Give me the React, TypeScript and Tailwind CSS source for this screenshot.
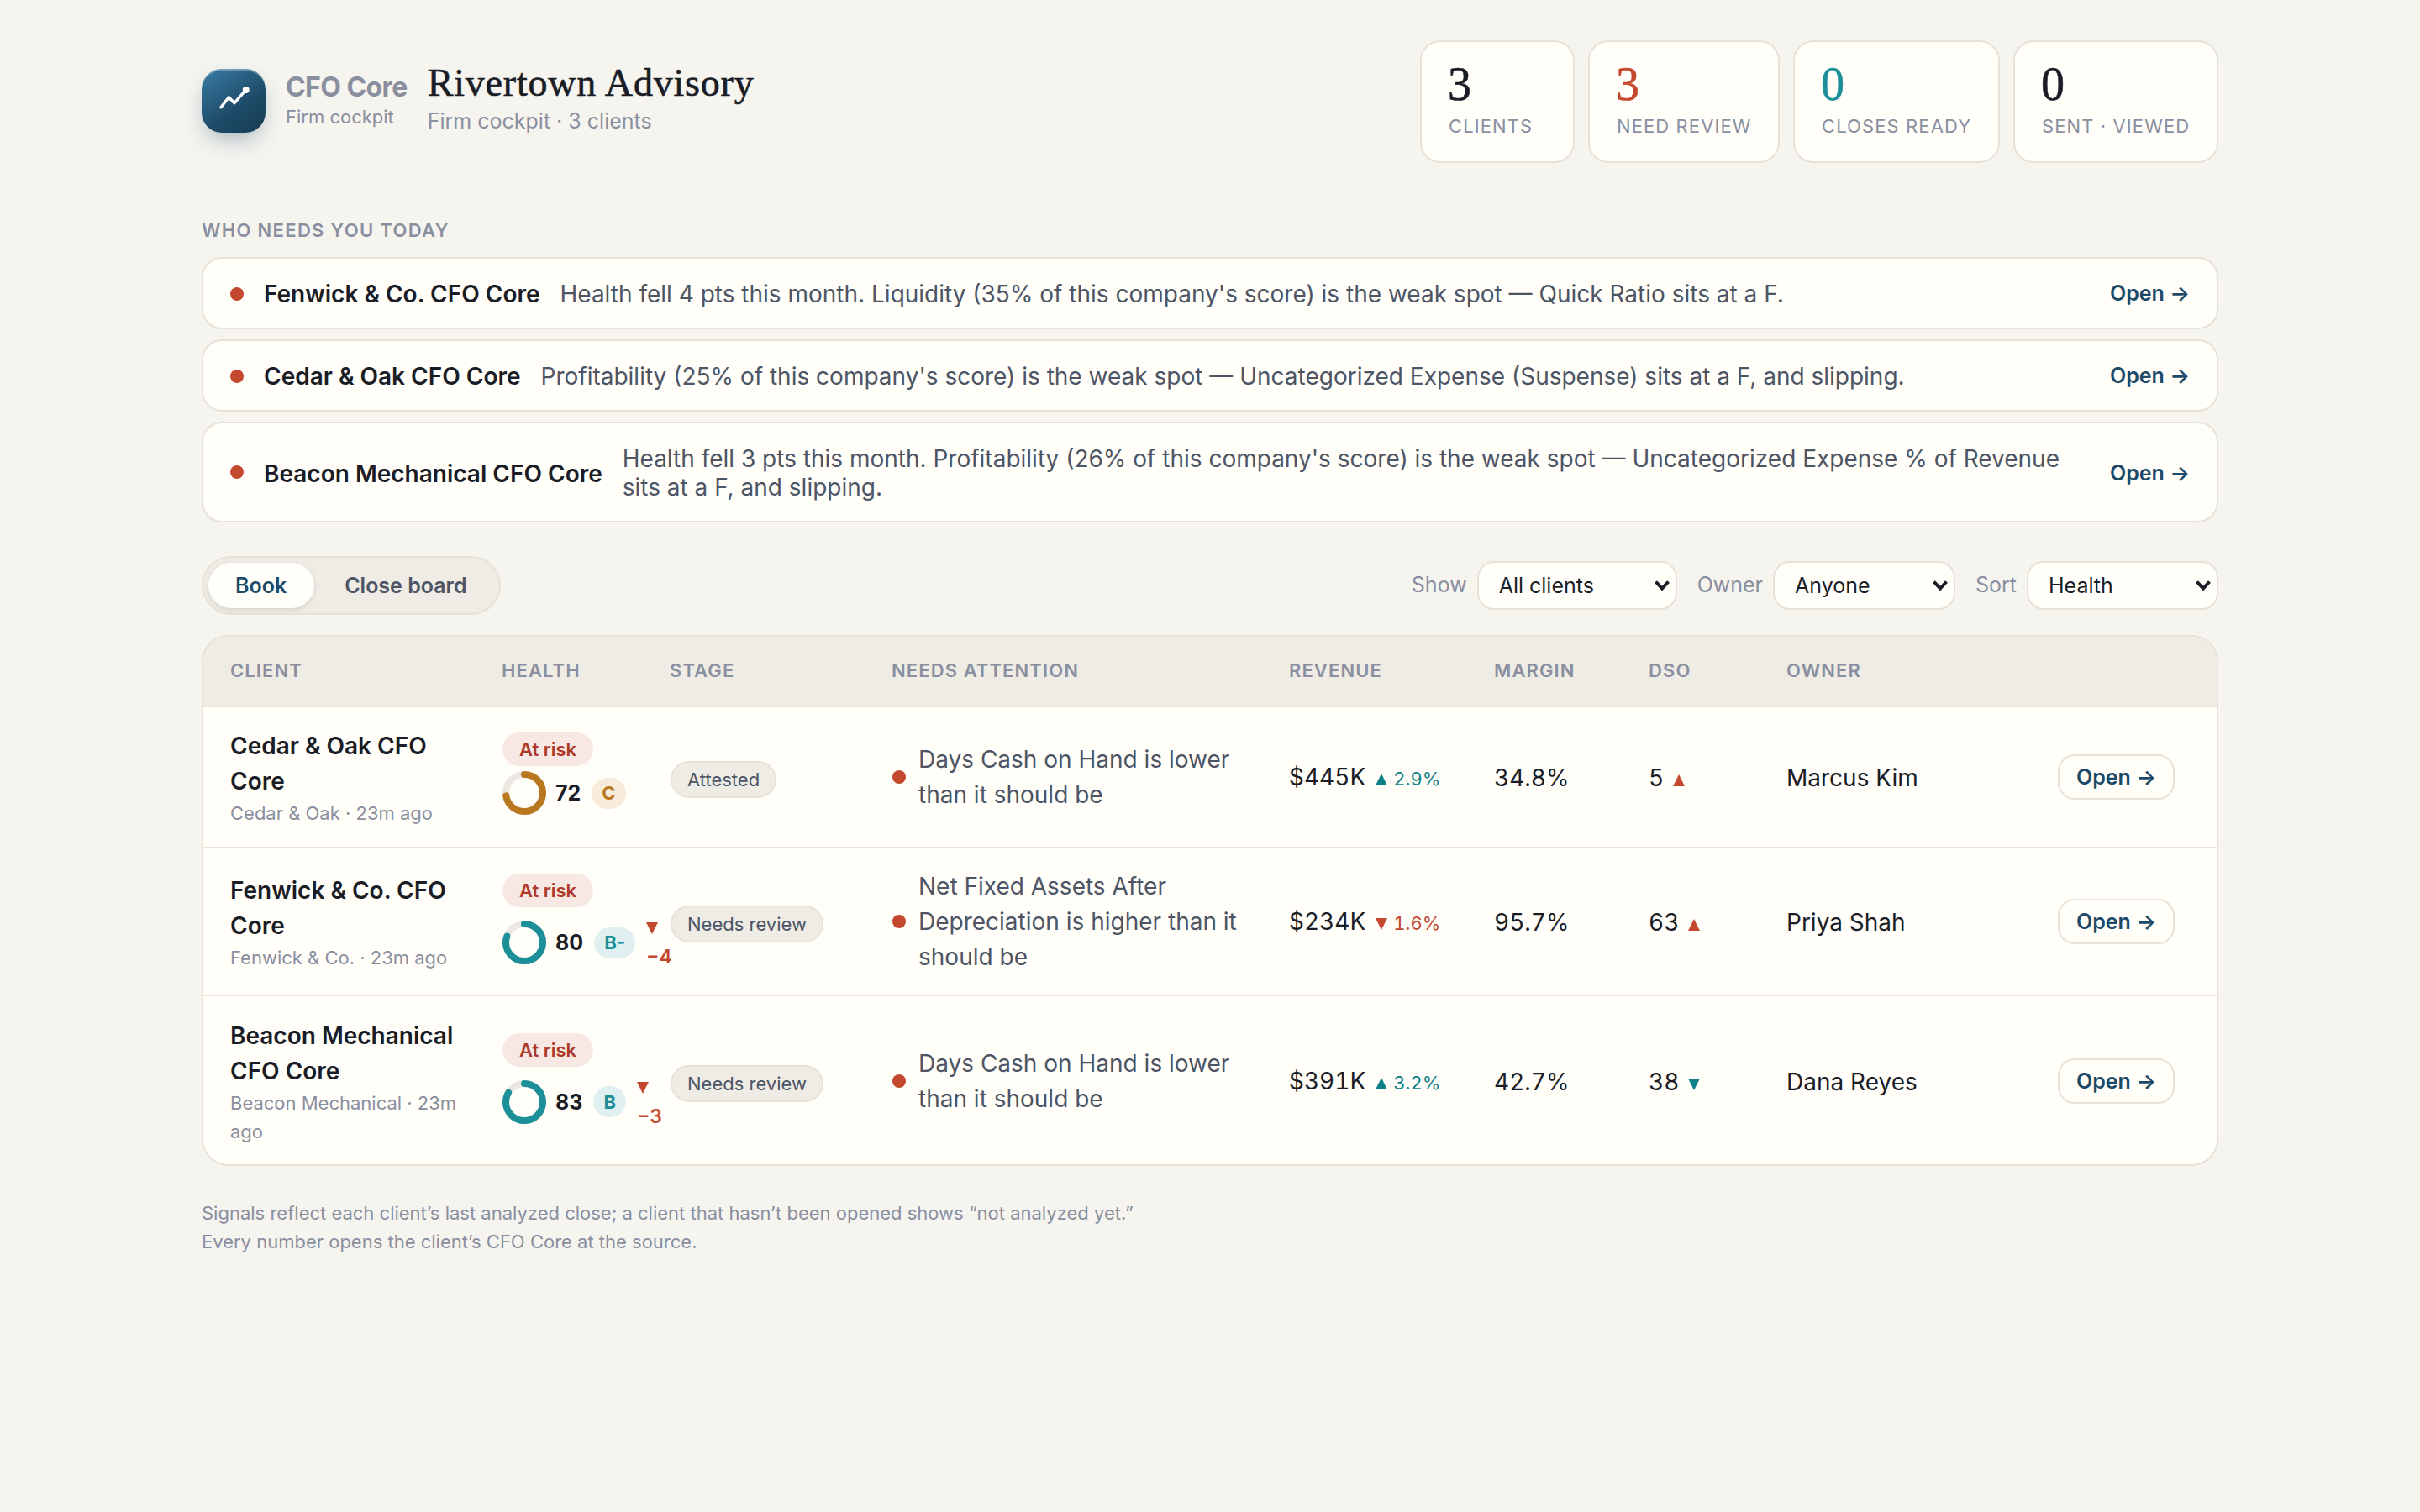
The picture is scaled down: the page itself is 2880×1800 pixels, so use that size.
import React from "react";

const stats = [
  { value: "3", label: "CLIENTS", width: "w-[184px]", color: "text-[#1a1d26]" },
  { value: "3", label: "NEED REVIEW", width: "w-[228px]", color: "text-[#c4482d]" },
  { value: "0", label: "CLOSES READY", width: "w-[246px]", color: "text-[#1c8f99]" },
  { value: "0", label: "SENT · VIEWED", width: "w-[244px]", color: "text-[#1a1d26]" },
];

const alerts = [
  {
    name: "Fenwick & Co. CFO Core",
    text: "Health fell 4 pts this month. Liquidity (35% of this company's score) is the weak spot — Quick Ratio sits at a F.",
    dotClass: "translate-y-px",
    nameClass: "translate-y-px",
    openClass: "",
  },
  {
    name: "Cedar & Oak CFO Core",
    text: "Profitability (25% of this company's score) is the weak spot — Uncategorized Expense (Suspense) sits at a F, and slipping.",
    dotClass: "translate-y-px",
    nameClass: "translate-y-px",
    openClass: "",
  },
  {
    name: "Beacon Mechanical CFO Core",
    text: "Health fell 3 pts this month. Profitability (26% of this company's score) is the weak spot — Uncategorized Expense % of Revenue sits at a F, and slipping.",
    dotClass: "",
    nameClass: "translate-y-[2px]",
    openClass: "translate-y-px",
  },
];

type Client = {
  name: string;
  meta: string;
  score: number;
  grade: string;
  amber?: boolean;
  change?: string;
  stage: string;
  need: string;
  revenue: string;
  revenueUp: boolean;
  revenueChange: string;
  margin: string;
  dso: string;
  dsoUp: boolean;
  owner: string;
  rowClass: string;
  healthClass: string;
};

const clients: Client[] = [
  {
    name: "Cedar & Oak CFO Core",
    meta: "Cedar & Oak · 23m ago",
    score: 72,
    grade: "C",
    amber: true,
    stage: "Attested",
    need: "Days Cash on Hand is lower than it should be",
    revenue: "$445K",
    revenueUp: true,
    revenueChange: "2.9%",
    margin: "34.8%",
    dso: "5",
    dsoUp: true,
    owner: "Marcus Kim",
    rowClass: "h-[168px] border-b-2",
    healthClass: "gap-[6px] pb-[8px]",
  },
  {
    name: "Fenwick & Co. CFO Core",
    meta: "Fenwick & Co. · 23m ago",
    score: 80,
    grade: "B-",
    change: "−4",
    stage: "Needs review",
    need: "Net Fixed Assets After Depreciation is higher than it should be",
    revenue: "$234K",
    revenueUp: false,
    revenueChange: "1.6%",
    margin: "95.7%",
    dso: "63",
    dsoUp: true,
    owner: "Priya Shah",
    rowClass: "h-[176px] border-b-2",
    healthClass: "gap-[7px] pt-[3px]",
  },
  {
    name: "Beacon Mechanical CFO Core",
    meta: "Beacon Mechanical · 23m ago",
    score: 83,
    grade: "B",
    change: "−3",
    stage: "Needs review",
    need: "Days Cash on Hand is lower than it should be",
    revenue: "$391K",
    revenueUp: true,
    revenueChange: "3.2%",
    margin: "42.7%",
    dso: "38",
    dsoUp: false,
    owner: "Dana Reyes",
    rowClass: "h-[200px] pt-px",
    healthClass: "gap-[7px] pt-[3px]",
  },
];

const columns =
  "grid grid-cols-[323px_200px_264px_473px_244px_184px_164px_1fr] pl-8";

function Logo() {
  return (
    <div className="-mt-px h-[76px] w-[76px] shrink-0 rounded-[24px] bg-[linear-gradient(145deg,#3a7ca6_0%,#1d4b67_60%,#163b53_100%)] shadow-[inset_0_2px_0_rgba(255,255,255,0.3),0_12px_28px_-8px_rgba(28,74,104,0.45)]">
      <svg viewBox="0 0 76 76" className="h-full w-full" fill="none">
        <path
          d="M23 45.8 32.3 33.7 39 40.7 52.3 25.3"
          stroke="#fff"
          strokeWidth="3.4"
          strokeLinecap="round"
          strokeLinejoin="round"
        />
        <circle cx="52.7" cy="25" r="4" fill="#fff" />
      </svg>
    </div>
  );
}

function Ring({ score, amber }: { score: number; amber?: boolean }) {
  const length = 2 * Math.PI * 22;
  return (
    <svg viewBox="0 0 52 52" className="h-[52px] w-[52px] shrink-0 -rotate-90" fill="none">
      <circle cx="26" cy="26" r="22" stroke="#eae8e1" strokeWidth="8" />
      <circle
        cx="26"
        cy="26"
        r="22"
        stroke={amber ? "#b9781f" : "#1c8f99"}
        strokeWidth="8"
        strokeLinecap="round"
        strokeDasharray={`${(length * score) / 100} ${length}`}
      />
    </svg>
  );
}

function Select({ label, value, width }: { label: string; value: string; width: string }) {
  return (
    <div className="flex items-center gap-3 text-[25px]">
      <span className="-mt-[3px] leading-[34px] text-[#8a8fa0]">{label}</span>
      <button
        className={`flex h-[58px] items-center justify-between rounded-[20px] border-2 border-[#e6e2d6] bg-[#fffef9] pl-6 pr-[6px] text-[#1a1d26] ${width}`}
      >
        <span className="translate-y-px">{value}</span>
        <svg viewBox="0 0 20 14" className="h-[14px] w-[20px]" fill="none">
          <path d="M2.5 2.5 10 10.5 17.5 2.5" stroke="#1a1d26" strokeWidth="4" />
        </svg>
      </button>
    </div>
  );
}

function Triangle({ up }: { up: boolean }) {
  return (
    <svg viewBox="0 0 14 14" className="inline-block h-[14px] w-[14px] align-baseline" fill="currentColor">
      <path d={up ? "M7 0 14 14H0Z" : "M0 0H14L7 14Z"} />
    </svg>
  );
}

export default function App() {
  return (
    <div className="min-h-[1800px] bg-[#f5f4ef] font-['Inter',sans-serif] text-[#1a1d26]">
      <main className="mx-auto w-[2400px] pt-12">
        <header className="flex h-[146px] items-center justify-between">
          <div className="-mt-[2px] flex items-center">
            <Logo />
            <div className="ml-6 flex flex-col">
              <span className="text-[32px] font-bold leading-[38px] tracking-[-0.018em] text-[#8a8fa0]">
                CFO Core
              </span>
              <span className="-mt-px text-[22px] leading-[34px] text-[#8a8fa0]">
                Firm cockpit
              </span>
            </div>
            <div className="-mt-[2px] ml-6 flex flex-col">
              <h1 className="font-['Liberation_Serif',serif] text-[46px] leading-[50px] tracking-[0.8px] [-webkit-text-stroke:0.6px_#1a1d26]">
                Rivertown Advisory
              </h1>
              <span className="text-[25px] leading-[40px] text-[#8a8fa0]">
                Firm cockpit · 3 clients
              </span>
            </div>
          </div>
          <div className="flex gap-4">
            {stats.map((s) => (
              <div
                key={s.label}
                className={`flex h-[146px] flex-col rounded-[24px] border-2 border-[#e6e2d6] bg-[#fffef9] pl-[32px] pt-[18px] ${s.width}`}
              >
                <span
                  className={`-ml-px font-['Liberation_Serif',serif] text-[56px] leading-[65px] [-webkit-text-stroke:0.6px_currentColor] ${s.color}`}
                >
                  {s.value}
                </span>
                <span className="whitespace-nowrap text-[22px] leading-[34px] tracking-[0.05em] text-[#8a8fa0]">
                  {s.label}
                </span>
              </div>
            ))}
          </div>
        </header>

        <h2 className="mt-[62px] text-[22px] font-semibold leading-[36px] tracking-[0.06em] text-[#8a8fa0]">
          WHO NEEDS YOU TODAY
        </h2>
        <section className="mt-[14px] flex flex-col gap-3">
          {alerts.map((a) => (
            <div
              key={a.name}
              className="flex items-center gap-6 rounded-[24px] border-2 border-[#e6e2d6] bg-[#fffef9] px-8 py-6"
            >
              <span className={`h-4 w-4 shrink-0 rounded-full bg-[#c4482d] ${a.dotClass}`} />
              <span className={`shrink-0 text-[28px] font-semibold leading-[34px] ${a.nameClass}`}>
                {a.name}
              </span>
              <span className="flex-1 translate-y-px text-[28px] leading-[34px] text-[#4d5565]">
                {a.text}
              </span>
              <span
                className={`ml-6 shrink-0 text-[25px] font-semibold leading-[34px] text-[#1c4a68] ${a.openClass}`}
              >
                Open →
              </span>
            </div>
          ))}
        </section>

        <div className="mt-10 flex h-[70px] items-center justify-between">
          <div className="flex h-[70px] gap-1 rounded-full border-2 border-[#e6e2d6] bg-[#eeece4] p-[6px] text-[25px] font-semibold">
            <button className="flex items-center rounded-full bg-[#fffef9] pl-8 pr-[33px] pt-px text-[#1c4a68] shadow-[0_2px_6px_rgba(26,29,38,0.12)]">
              Book
            </button>
            <button className="flex items-center rounded-full px-8 pt-px text-[#4d5565]">
              Close board
            </button>
          </div>
          <div className="flex gap-6">
            <Select label="Show" value="All clients" width="w-[238px]" />
            <Select label="Owner" value="Anyone" width="w-[217px]" />
            <Select label="Sort" value="Health" width="w-[228px]" />
          </div>
        </div>

        <section className="mt-6 overflow-hidden rounded-[32px] border-2 border-[#e6e2d6] bg-[#fffef9]">
          <div
            className={`${columns} h-[84px] items-center border-b-2 border-[#e6e2d6] bg-[#eeece4] pb-[2px] text-[22px] font-semibold tracking-[0.05em] text-[#8a8fa0]`}
          >
            <span>CLIENT</span>
            <span>HEALTH</span>
            <span>STAGE</span>
            <span>NEEDS ATTENTION</span>
            <span>REVENUE</span>
            <span>MARGIN</span>
            <span>DSO</span>
            <span>OWNER</span>
          </div>
          {clients.map((c) => (
            <div
              key={c.name}
              className={`${columns} items-center border-[#e6e2d6] text-[28px] leading-[42px] ${c.rowClass}`}
            >
              <div className="w-[290px] pt-[2px]">
                <div className="font-semibold">{c.name}</div>
                <div className="text-[22px] leading-[34px] text-[#8a8fa0]">{c.meta}</div>
              </div>

              <div className={`flex flex-col ${c.healthClass}`}>
                <span className="ml-px flex h-10 w-[108px] items-center justify-center rounded-full bg-[#f8e8e3] text-[22px] font-semibold text-[#ad3a28]">
                  At risk
                </span>
                <div className="ml-px flex items-center">
                  <Ring score={c.score} amber={c.amber} />
                  <span className="ml-[11px] text-[25px] font-bold">{c.score}</span>
                  <span
                    className={`ml-[13px] flex h-[37px] items-center rounded-full px-3 text-[22px] font-bold ${
                      c.amber ? "bg-[#f7ebd9] text-[#b9781f]" : "bg-[#e0f0f1] text-[#1c8f99]"
                    }`}
                  >
                    {c.grade}
                  </span>
                  {c.change && (
                    <span className="ml-[13px] flex flex-col text-[23px] font-semibold leading-[35px] text-[#c4482d]">
                      <span>
                        <Triangle up={false} />
                      </span>
                      <span>{c.change}</span>
                    </span>
                  )}
                </div>
              </div>

              <div className="pl-px pt-[6px]">
                <span className="flex h-11 w-fit items-center rounded-full border-2 border-[#e6e2d6] bg-[#eeece4] px-[18px] text-[22px] text-[#4d5565]">
                  {c.stage}
                </span>
              </div>

              <div className="flex items-center gap-[15px] pl-px pr-10">
                <span className="h-4 w-4 shrink-0 rounded-full bg-[#c4482d]" />
                <span className="text-[#4d5565]">{c.need}</span>
              </div>

              <div className="whitespace-nowrap pt-[2px] tabular-nums">
                {c.revenue}
                <span
                  className={`ml-[12px] text-[22px] ${c.revenueUp ? "text-[#0f8088]" : "text-[#c4482d]"}`}
                >
                  <Triangle up={c.revenueUp} />
                  <span className="ml-[7px]">{c.revenueChange}</span>
                </span>
              </div>
              <div className="pt-[2px] tabular-nums">{c.margin}</div>
              <div className="pt-[2px] tabular-nums">
                {c.dso}
                <span className={`ml-[11px] ${c.dsoUp ? "text-[#c4482d]" : "text-[#0f8088]"}`}>
                  <Triangle up={c.dsoUp} />
                </span>
              </div>
              <div className="flex items-center justify-between pr-[50px]">
                <span className="translate-y-px">{c.owner}</span>
                <button className="h-[54px] rounded-[20px] border-2 border-[#e6e2d6] px-5 text-[25px] font-semibold leading-[50px] text-[#1c4a68]">
                  Open →
                </button>
              </div>
            </div>
          ))}
        </section>

        <footer className="mt-[39px] text-[22px] leading-[34px] text-[#8a8fa0]">
          <p>
            Signals reflect each client’s last analyzed close; a client that hasn’t been opened
            shows “not analyzed yet.”
          </p>
          <p>Every number opens the client’s CFO Core at the source.</p>
        </footer>
      </main>
    </div>
  );
}
